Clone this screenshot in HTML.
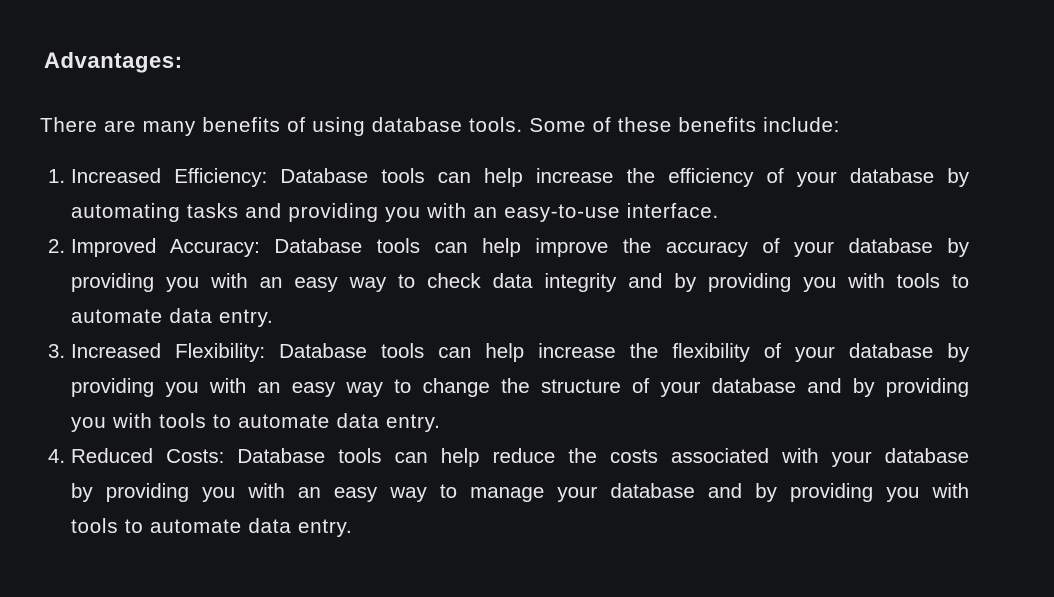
<!DOCTYPE html>
<html><head><meta charset="utf-8"><style>
html,body{margin:0;padding:0;background:#131418;}
body{width:1054px;height:597px;overflow:hidden;font-family:"Liberation Sans",sans-serif;color:#e8e8e8;position:relative;}
.h{position:absolute;left:44px;top:48px;font-size:22px;font-weight:bold;letter-spacing:0.6px;}
.p{position:absolute;left:40px;top:114px;font-size:20.5px;letter-spacing:0.8px;white-space:nowrap;}
.l{position:absolute;left:71px;width:898px;font-size:20.5px;height:35px;line-height:35px;white-space:nowrap;}
.j{text-align:justify;text-align-last:justify;white-space:normal;}
.t{letter-spacing:0.8px;}
.n{position:absolute;left:-23px;top:0;}
</style></head><body>
<div class="h">Advantages:</div>
<div class="p">There are many benefits of using database tools. Some of these benefits include:</div>

<div class="l j" style="top:159px"><span class="n">1.</span>Increased Efficiency: Database tools can help increase the efficiency of your database by</div>
<div class="l t" style="top:194px">automating tasks and providing you with an easy-to-use interface.</div>

<div class="l j" style="top:229px"><span class="n">2.</span>Improved Accuracy: Database tools can help improve the accuracy of your database by</div>
<div class="l j" style="top:264px">providing you with an easy way to check data integrity and by providing you with tools to</div>
<div class="l t" style="top:299px">automate data entry.</div>

<div class="l j" style="top:334px"><span class="n">3.</span>Increased Flexibility: Database tools can help increase the flexibility of your database by</div>
<div class="l j" style="top:369px">providing you with an easy way to change the structure of your database and by providing</div>
<div class="l t" style="top:404px">you with tools to automate data entry.</div>

<div class="l j" style="top:439px"><span class="n">4.</span>Reduced Costs: Database tools can help reduce the costs associated with your database</div>
<div class="l j" style="top:474px">by providing you with an easy way to manage your database and by providing you with</div>
<div class="l t" style="top:509px">tools to automate data entry.</div>
</body></html>
